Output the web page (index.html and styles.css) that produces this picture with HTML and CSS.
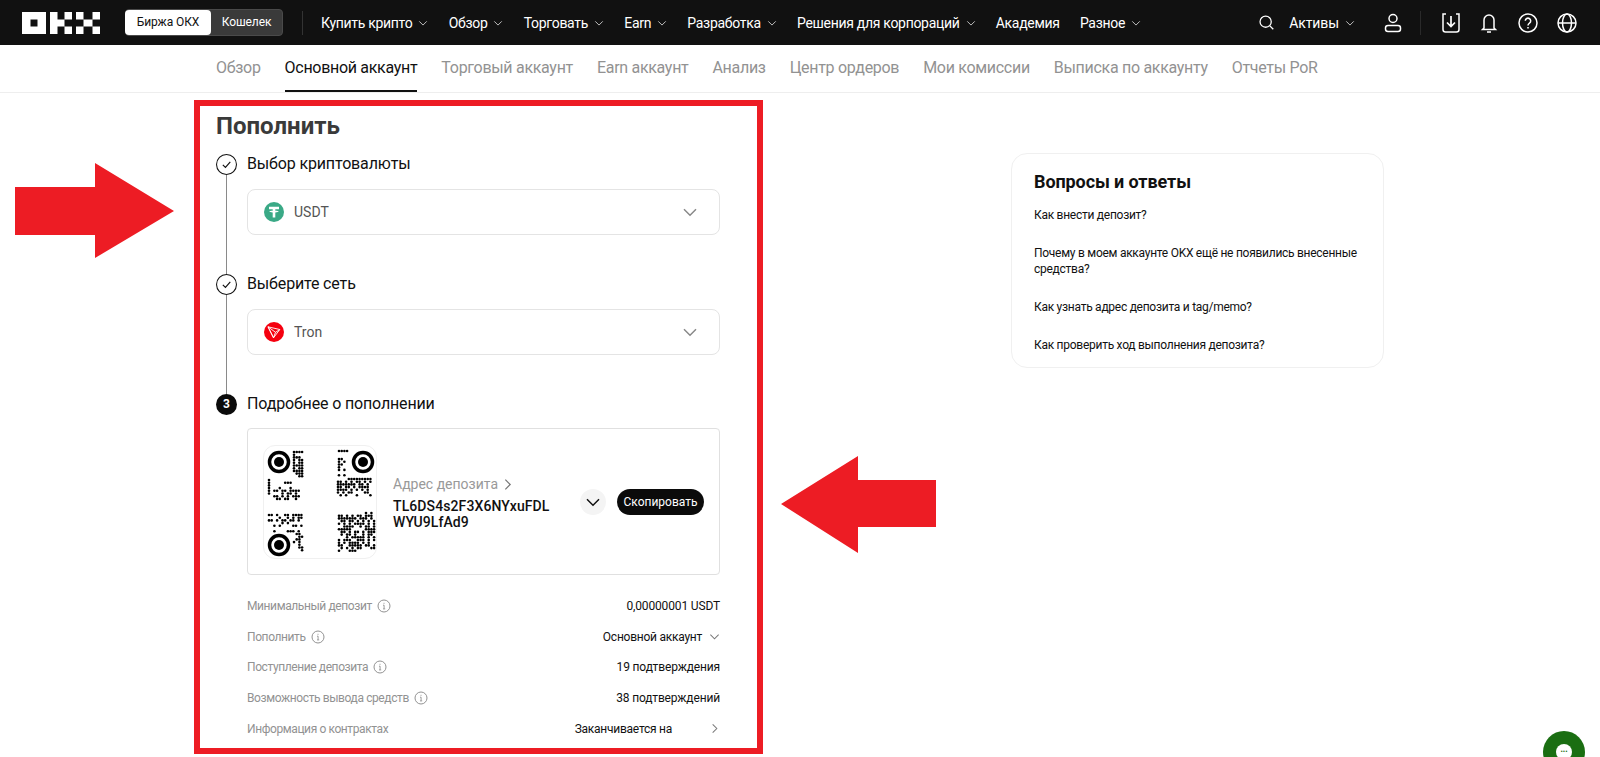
FILE: index.html
```html
<!DOCTYPE html>
<html lang="ru">
<head>
    <meta charset="UTF-8">
    <meta name="viewport" content="width=device-width, initial-scale=1.0">
    <title>Пополнить | OKX</title>
    <link rel="stylesheet" href="styles.css">
</head>
<body>

    <svg class="sprites" width="0" height="0">
        <symbol id="chev" viewBox="0 0 12 12"><path d="M1.5 4l4.5 4.5L10.5 4" fill="none" stroke="currentColor" stroke-width="1.1"/></symbol>
        <symbol id="chev-right" viewBox="0 0 12 12"><path d="M4 1.5L8.5 6 4 10.5" fill="none" stroke="currentColor" stroke-width="1.1"/></symbol>
        <symbol id="info" viewBox="0 0 14 14"><circle cx="7" cy="7" r="6" fill="none" stroke="currentColor"/><path d="M6 6.2h1.1v3.6M6 9.9h2.2M7 3.8v1" fill="none" stroke="currentColor" stroke-width=".9"/></symbol>
        <symbol id="check" viewBox="0 0 20 20"><circle cx="10" cy="10" r="9.5" fill="#fff" stroke="#111"/><path d="M6.5 10.3l2.5 2.5 4.6-5.4" fill="none" stroke="#111" stroke-width="1.1"/></symbol>
    </svg>

    <header class="topbar">
        <svg class="logo" width="78" height="22" viewBox="0 0 78 22" fill="#fff">
            <path fill-rule="evenodd" d="M0 0h24v22H0zM8.5 7.5v7h7v-7z"/>
            <path d="M28 0h7.5v7.500H28zM28 7.500h7.500v7H28zM28 14.500h7.500V22H28zM35.500 7.500h7v7h-7zM42.500 0H50v7.500h-7.500zM42.500 14.500H50V22h-7.500zM54 0h7.500v7.500H54zM70.500 0H78v7.500h-7.500zM61.500 7.500h9v7h-9zM54 14.500h7.500V22H54zM70.500 14.500H78V22h-7.500z"/>
        </svg>
        <div class="switch">
            <span class="switch-on">Биржа ОКХ</span>
            <span class="switch-off">Кошелек</span>
        </div>
        <span class="bar-divider"></span>
        <nav class="mainnav">
            <a>Купить крипто <svg><use href="#chev"/></svg></a>
            <a>Обзор <svg><use href="#chev"/></svg></a>
            <a>Торговать <svg><use href="#chev"/></svg></a>
            <a>Earn <svg><use href="#chev"/></svg></a>
            <a>Разработка <svg><use href="#chev"/></svg></a>
            <a>Решения для корпораций <svg><use href="#chev"/></svg></a>
            <a>Академия</a>
            <a>Разное <svg><use href="#chev"/></svg></a>
        </nav>
        <div class="bar-right">
            <svg class="bar-icon search" viewBox="0 0 20 20" fill="none" stroke="#fff" stroke-width="1.5"><circle cx="9" cy="9" r="6.600"/><path d="M14 14l4 4"/></svg>
            <a class="assets">Активы <svg><use href="#chev"/></svg></a>
            <svg class="bar-icon user" viewBox="0 0 20 20" fill="none" stroke="#fff" stroke-width="1.5"><circle cx="10" cy="5.500" r="4"/><rect x="2.500" y="12.500" width="15" height="6" rx="2.500"/></svg>
            <span class="bar-divider dim"></span>
            <svg class="bar-icon download" viewBox="0 0 20 20" fill="none" stroke="#fff" stroke-width="1.5"><path d="M5 1H2v15.500c0 1.500 1 2.500 2.500 2.500h11c1.500 0 2.500-1 2.500-2.500V1h-3"/><path d="M10 3v10M6 9.500l4 4 4-4" stroke-width="1.700"/></svg>
            <svg class="bar-icon bell" viewBox="0 0 20 20" fill="none" stroke="#fff" stroke-width="1.5"><path d="M5 15V7a5 5 0 0 1 10 0v8l1.500 1.500h-13zM8 19h4"/></svg>
            <svg class="bar-icon help" viewBox="0 0 20 20" fill="none" stroke="#fff" stroke-width="1.500"><circle cx="10" cy="10" r="9"/><path d="M7.300 7.800a2.700 2.700 0 1 1 4.200 2.300c-1 .7-1.500 1.200-1.500 2.400M10 14v1.500"/></svg>
            <svg class="bar-icon globe" viewBox="0 0 20 20" fill="none" stroke="#fff" stroke-width="1.500"><circle cx="10" cy="10" r="9"/><ellipse cx="10" cy="10" rx="4.500" ry="9"/><path d="M1 10h18"/></svg>
        </div>
    </header>

    <nav class="tabs">
        <a>Обзор</a>
        <a class="active">Основной аккаунт</a>
        <a>Торговый аккаунт</a>
        <a>Earn аккаунт</a>
        <a>Анализ</a>
        <a>Центр ордеров</a>
        <a>Мои комиссии</a>
        <a>Выписка по аккаунту</a>
        <a>Отчеты PoR</a>
    </nav>

    <main class="page">
        <section class="deposit">
            <h1>Пополнить</h1>

            <div class="step">
                <div class="rail"><svg class="step-mark"><use href="#check"/></svg><span class="rail-line"></span></div>
                <div class="step-body">
                    <div class="step-title">Выбор криптовалюты</div>
                    <div class="select">
                        <svg class="coin" viewBox="0 0 20 20">
                            <circle cx="10" cy="10" r="10" fill="#3aa986"/>
                            <path d="M5 4.800h10v2.400h-3.700v1.500c1.900.1 3.400.4 3.400.9s-1.500.8-3.400.9v5H8.700v-5c-1.900-.1-3.400-.4-3.400-.9s1.500-.8 3.400-.9V7.200H5z" fill="#fff"/>
                        </svg>
                        <span class="select-text">USDT</span>
                        <svg class="select-chev"><use href="#chev"/></svg>
                    </div>
                </div>
            </div>

            <div class="step">
                <div class="rail"><svg class="step-mark"><use href="#check"/></svg><span class="rail-line"></span></div>
                <div class="step-body">
                    <div class="step-title">Выберите сеть</div>
                    <div class="select">
                        <svg class="coin" viewBox="0 0 20 20">
                            <circle cx="10" cy="10" r="10" fill="#f5000f"/>
                            <path d="M4 4.800l11.800 2.700-6.300 8.300zM4 4.800l5.500 11M4 4.800l7.500 5.500 4.300-2.800M11.500 10.300l-2 5.500" fill="none" stroke="#fff" stroke-width=".9" stroke-linejoin="round"/>
                        </svg>
                        <span class="select-text">Tron</span>
                        <svg class="select-chev"><use href="#chev"/></svg>
                    </div>
                </div>
            </div>

            <div class="step last">
                <div class="rail"><span class="step-num">3</span></div>
                <div class="step-body">
                    <div class="step-title">Подробнее о пополнении</div>
                    <div class="address-box">
                        <div class="qr">
                            <svg id="qr-code" width="112" height="112" viewBox="0 0 112 112">
                                <g fill="none" stroke="#000" stroke-width="3.500">
                                    <circle cx="14" cy="15" r="9.500"/>
                                    <circle cx="98" cy="15" r="9.500"/>
                                    <circle cx="14" cy="98" r="9.500"/>
                                </g>
                                <circle cx="14" cy="15" r="5"/>
                                <circle cx="98" cy="15" r="5"/>
                                <circle cx="14" cy="98" r="5"/>
                            </svg>
                        </div>
                        <div class="address">
                            <div class="address-label">Адрес депозита <svg><use href="#chev-right"/></svg></div>
                            <div class="address-value">TL6DS4s2F3X6NYxuFDL<br>WYU9LfAd9</div>
                        </div>
                        <span class="round-btn"><svg><use href="#chev"/></svg></span>
                        <span class="copy-btn">Скопировать</span>
                    </div>

                    <div class="rows">
                        <div class="row"><span class="row-label">Минимальный депозит <svg><use href="#info"/></svg></span><span>0,00000001 USDT</span></div>
                        <div class="row"><span class="row-label">Пополнить <svg><use href="#info"/></svg></span><span class="row-pick">Основной аккаунт <svg><use href="#chev"/></svg></span></div>
                        <div class="row"><span class="row-label">Поступление депозита <svg><use href="#info"/></svg></span><span>19 подтверждения</span></div>
                        <div class="row"><span class="row-label">Возможность вывода средств <svg><use href="#info"/></svg></span><span>38 подтверждений</span></div>
                        <div class="row"><span class="row-label">Информация о контрактах</span><span class="row-pick wide">Заканчивается на <svg><use href="#chev-right"/></svg></span></div>
                    </div>
                </div>
            </div>
        </section>

        <aside class="faq">
            <h2>Вопросы и ответы</h2>
            <a>Как внести депозит?</a>
            <a>Почему в моем аккаунте OKX ещё не появились внесенные средства?</a>
            <a>Как узнать адрес депозита и tag/memo?</a>
            <a>Как проверить ход выполнения депозита?</a>
        </aside>
    </main>

    <!-- annotations on top of the screenshot -->
    <div class="red-frame"></div>
    <svg class="arrow arrow-left" width="160" height="96" viewBox="0 0 160 96"><path d="M0 24h80V0l79 48-79 47V72H0z" fill="#ed1c24"/></svg>
    <svg class="arrow arrow-right" width="155" height="98" viewBox="0 0 155 98"><path d="M155 24H77V0L0 48l77 49V71h78z" fill="#ed1c24"/></svg>

    <div class="chat"><span>•••</span></div>

    <script src="qr.js"></script>
</body>
</html>
```

FILE: styles.css
```css
* {
    box-sizing: border-box;
}
html, body {
    height: 757px;
    overflow: hidden;
}
body {
    margin: 0;
    position: relative;
    font-family: Roboto, "Noto Sans", Arial, sans-serif;
    background: #fff;
    color: #111;
}
.sprites {
    position: absolute;
}

/* top bar */
.topbar {
    display: flex;
    align-items: center;
    height: 45px;
    padding-left: 22px;
    background: #111;
    color: #fff;
    font-size: 14px;
    letter-spacing: -0.3px;
}
.logo {
    flex: none;
}
.switch {
    display: flex;
    height: 27px;
    margin-left: 25px;
    background: #3a3a3a;
    border: 1px solid #4a4a4a;
    border-radius: 4px;
    font-size: 12px;
    line-height: 25px;
    letter-spacing: -0.1px;
}
.switch-on {
    width: 86px;
    margin-left: -1px;
    background: #fff;
    color: #111;
    text-align: center;
    border-radius: 4px;
}
.switch-off {
    width: 71px;
    text-align: center;
}
.bar-divider {
    width: 1px;
    height: 24px;
    margin-left: 19px;
    background: #333;
}
.mainnav {
    display: flex;
    margin-left: 18px;
    gap: 20.2px;
}
.mainnav a, .assets {
    display: flex;
    align-items: center;
    gap: 6px;
    white-space: nowrap;
}
.mainnav svg, .assets svg {
    width: 10px;
    height: 10px;
    color: #ccc;
}
.bar-right {
    display: flex;
    align-items: center;
    margin-left: auto;
    padding-right: 23px;
}
.bar-icon {
    flex: none;
    width: 20px;
    height: 20px;
}
.search {
    width: 17px;
    height: 17px;
}
.assets {
    margin-left: 14px;
    letter-spacing: -0.1px;
}
.user {
    margin-left: 28px;
}
.bar-divider.dim {
    margin-left: 17px;
    background: #2a2a2a;
}
.download {
    margin-left: 20px;
}
.bell {
    margin-left: 18px;
}
.help {
    margin-left: 19px;
}
.globe {
    margin-left: 19px;
}

/* sub navigation */
.tabs {
    display: flex;
    gap: 24px;
    height: 48px;
    padding-left: 216px;
    border-bottom: 1px solid #eee;
    font-size: 16px;
    letter-spacing: -0.3px;
    color: #929292;
}
.tabs a {
    line-height: 45px;
    height: 47px;
    white-space: nowrap;
}
.tabs a.active {
    color: #111;
    border-bottom: 2px solid #111;
}

/* page */
.page {
    display: flex;
    align-items: flex-start;
    padding-left: 216px;
}
.deposit {
    width: 504px;
    padding-top: 17px;
}
h1 {
    margin: 0 0 12px;
    font-size: 24px;
    font-weight: 700;
    line-height: 32px;
    color: #3a3a3a;
}
.step {
    display: flex;
    height: 120px;
}
.step.last {
    height: auto;
}
.rail {
    display: flex;
    flex-direction: column;
    align-items: center;
    width: 21px;
    flex: none;
}
.step-mark {
    width: 21px;
    height: 21px;
    flex: none;
}
.rail-line {
    flex: 1;
    width: 1px;
    background: #8a8a8a;
}
.step-num {
    width: 21px;
    height: 21px;
    border-radius: 50%;
    background: #0b0b0b;
    color: #fff;
    font-size: 12px;
    font-weight: 700;
    line-height: 21px;
    text-align: center;
}
.step-body {
    flex: 1;
    margin-left: 10px;
}
.step-title {
    height: 20px;
    font-size: 16px;
    letter-spacing: -0.15px;
    line-height: 20px;
    margin-bottom: 15px;
}
.last .step-title {
    margin-bottom: 14px;
}
.select {
    display: flex;
    align-items: center;
    height: 46px;
    padding: 0 21px 0 16px;
    border: 1px solid #e4e4e4;
    border-radius: 8px;
}
.coin {
    width: 20px;
    height: 20px;
}
.select-text {
    margin-left: 10px;
    font-size: 14px;
    color: #555;
}
.select-chev {
    width: 16px;
    height: 16px;
    margin-left: auto;
    color: #888;
}

/* address */
.address-box {
    display: flex;
    align-items: center;
    height: 147px;
    padding: 0 15px;
    border: 1px solid #e0e0e0;
    border-radius: 4px;
}
.qr {
    flex: none;
    width: 114px;
    height: 114px;
    padding: 1px;
    border: 1px solid #f0f0f0;
    border-radius: 12px;
}
.qr svg {
    display: block;
}
.address {
    width: 187px;
    margin-left: 16px;
    padding-top: 3px;
}
.address-label {
    display: flex;
    align-items: center;
    gap: 3px;
    font-size: 14px;
    color: #999;
    margin-bottom: 6px;
}
.address-label svg {
    width: 13px;
    height: 13px;
    color: #777;
}
.address-value {
    font-size: 14px;
    font-weight: 500;
    letter-spacing: 0.1px;
    line-height: 16px;
}
.round-btn {
    display: flex;
    align-items: center;
    justify-content: center;
    flex: none;
    width: 26px;
    height: 26px;
    border-radius: 50%;
    background: #f4f4f4;
}
.round-btn svg {
    width: 16px;
    height: 16px;
}
.copy-btn {
    flex: none;
    width: 87px;
    height: 26px;
    margin-left: 11px;
    background: #0b0b0b;
    color: #fff;
    border-radius: 13px;
    font-size: 12px;
    line-height: 26px;
    text-align: center;
}

/* details */
.rows {
    margin-top: 16px;
}
.row {
    display: flex;
    align-items: center;
    justify-content: space-between;
    height: 30.6px;
    font-size: 12px;
    letter-spacing: -0.15px;
}
.row-label {
    display: flex;
    align-items: center;
    gap: 5px;
    letter-spacing: -0.4px;
    color: #929292;
}
.row-label svg {
    width: 14px;
    height: 14px;
}
.row-pick {
    display: flex;
    align-items: center;
    gap: 7px;
    letter-spacing: -0.25px;
}
.row-pick svg {
    width: 11px;
    height: 11px;
    color: #777;
}
.row-pick.wide {
    gap: 37px;
}

/* faq */
.faq {
    width: 373px;
    height: 215px;
    margin: 60px 0 0 291px;
    padding: 16px 22px;
    border: 1px solid #f0f0f0;
    border-radius: 16px;
    font-size: 12px;
    letter-spacing: -0.27px;
    line-height: 16px;
}
.faq h2 {
    margin: 0 0 13px;
    font-size: 18px;
    font-weight: 700;
    letter-spacing: -0.1px;
    line-height: 24px;
}
.faq a {
    display: block;
    margin-bottom: 22px;
}

/* annotations */
.red-frame {
    position: absolute;
    left: 194px;
    top: 100px;
    width: 569px;
    height: 654px;
    border: 6px solid #ed1c24;
}
.arrow {
    position: absolute;
}
.arrow-left {
    left: 15px;
    top: 163px;
}
.arrow-right {
    left: 781px;
    top: 456px;
}
.chat {
    position: absolute;
    left: 1543px;
    top: 731px;
    width: 42px;
    height: 42px;
    border-radius: 50%;
    background: #1a6e12;
}
.chat span {
    position: absolute;
    left: 13px;
    top: 13px;
    width: 16px;
    height: 16px;
    border-radius: 50%;
    background: #fff;
    color: #1a6e12;
    font-size: 7px;
    line-height: 16px;
    text-align: center;
}
```

FILE: qr.js
```js
// rough copy of the code dots, one block per cluster
const blocks = [
    { x: 29, y: 5, rows: ["1111", "1...", "111.", "1.11", "1.11", "1111", "1.11", "1111", ".111", "..11"] },
    { x: 4, y: 33, rows: ["1...........", "1.....111...", "1...........", "1...1...1...", "1.11.11.1111", "1....1.11.1.", "..11.1.1.111", "...11.11..1."] },
    { x: 74, y: 4, rows: ["1111", "....", "....", "11..", "1.1.", "11..", "1...", "1.1.", "....", "1.1."] },
    { x: 73, y: 32, rows: ["....111111111", "11.1.1.11.1.1", "1111111.11.1.", "11.11.1.1111.", "1111.1.1.1.1.", "1.1.11....11.", ".1.1...1....1"] },
    { x: 4, y: 68, rows: ["11.1..11.1111", "....1..1.1.11", "11.1.11.11.1.", ".....1.1.....", "..1.1....11.1", "...............", "..1....111.1."] },
    { x: 29, y: 87, rows: [".11.", "..11", ".11.", "1.1.", "..1.", "..11", "...1"] },
    { x: 74, y: 66, rows: ["..........1.1.", "11.1.1.11.111.", "1111111.111.1.", ".11.11.1.1.1.1", "1.1.1.1111.1.1", "..1111..1.11.1", "11111.....1111", ".11.1.11.1.111", ".1.11.1..1.11.", "...1.11111.1.1", "1.111..111.1.1", "1.1.1111.1.1..", "11..11111.11.1", ".1.1.1.11...11", "1...111......"] }
];

const qr = document.getElementById("qr-code");
const step = 2.7;

blocks.forEach(block => {
    block.rows.forEach((row, r) => {
        for (let c = 0; c < row.length; c++) {
            if (row[c] !== "1") continue;
            const dot = document.createElementNS("http://www.w3.org/2000/svg", "circle");
            dot.setAttribute("cx", block.x + c * step);
            dot.setAttribute("cy", block.y + r * step);
            dot.setAttribute("r", 1.3);
            qr.appendChild(dot);
        }
    });
});
```
